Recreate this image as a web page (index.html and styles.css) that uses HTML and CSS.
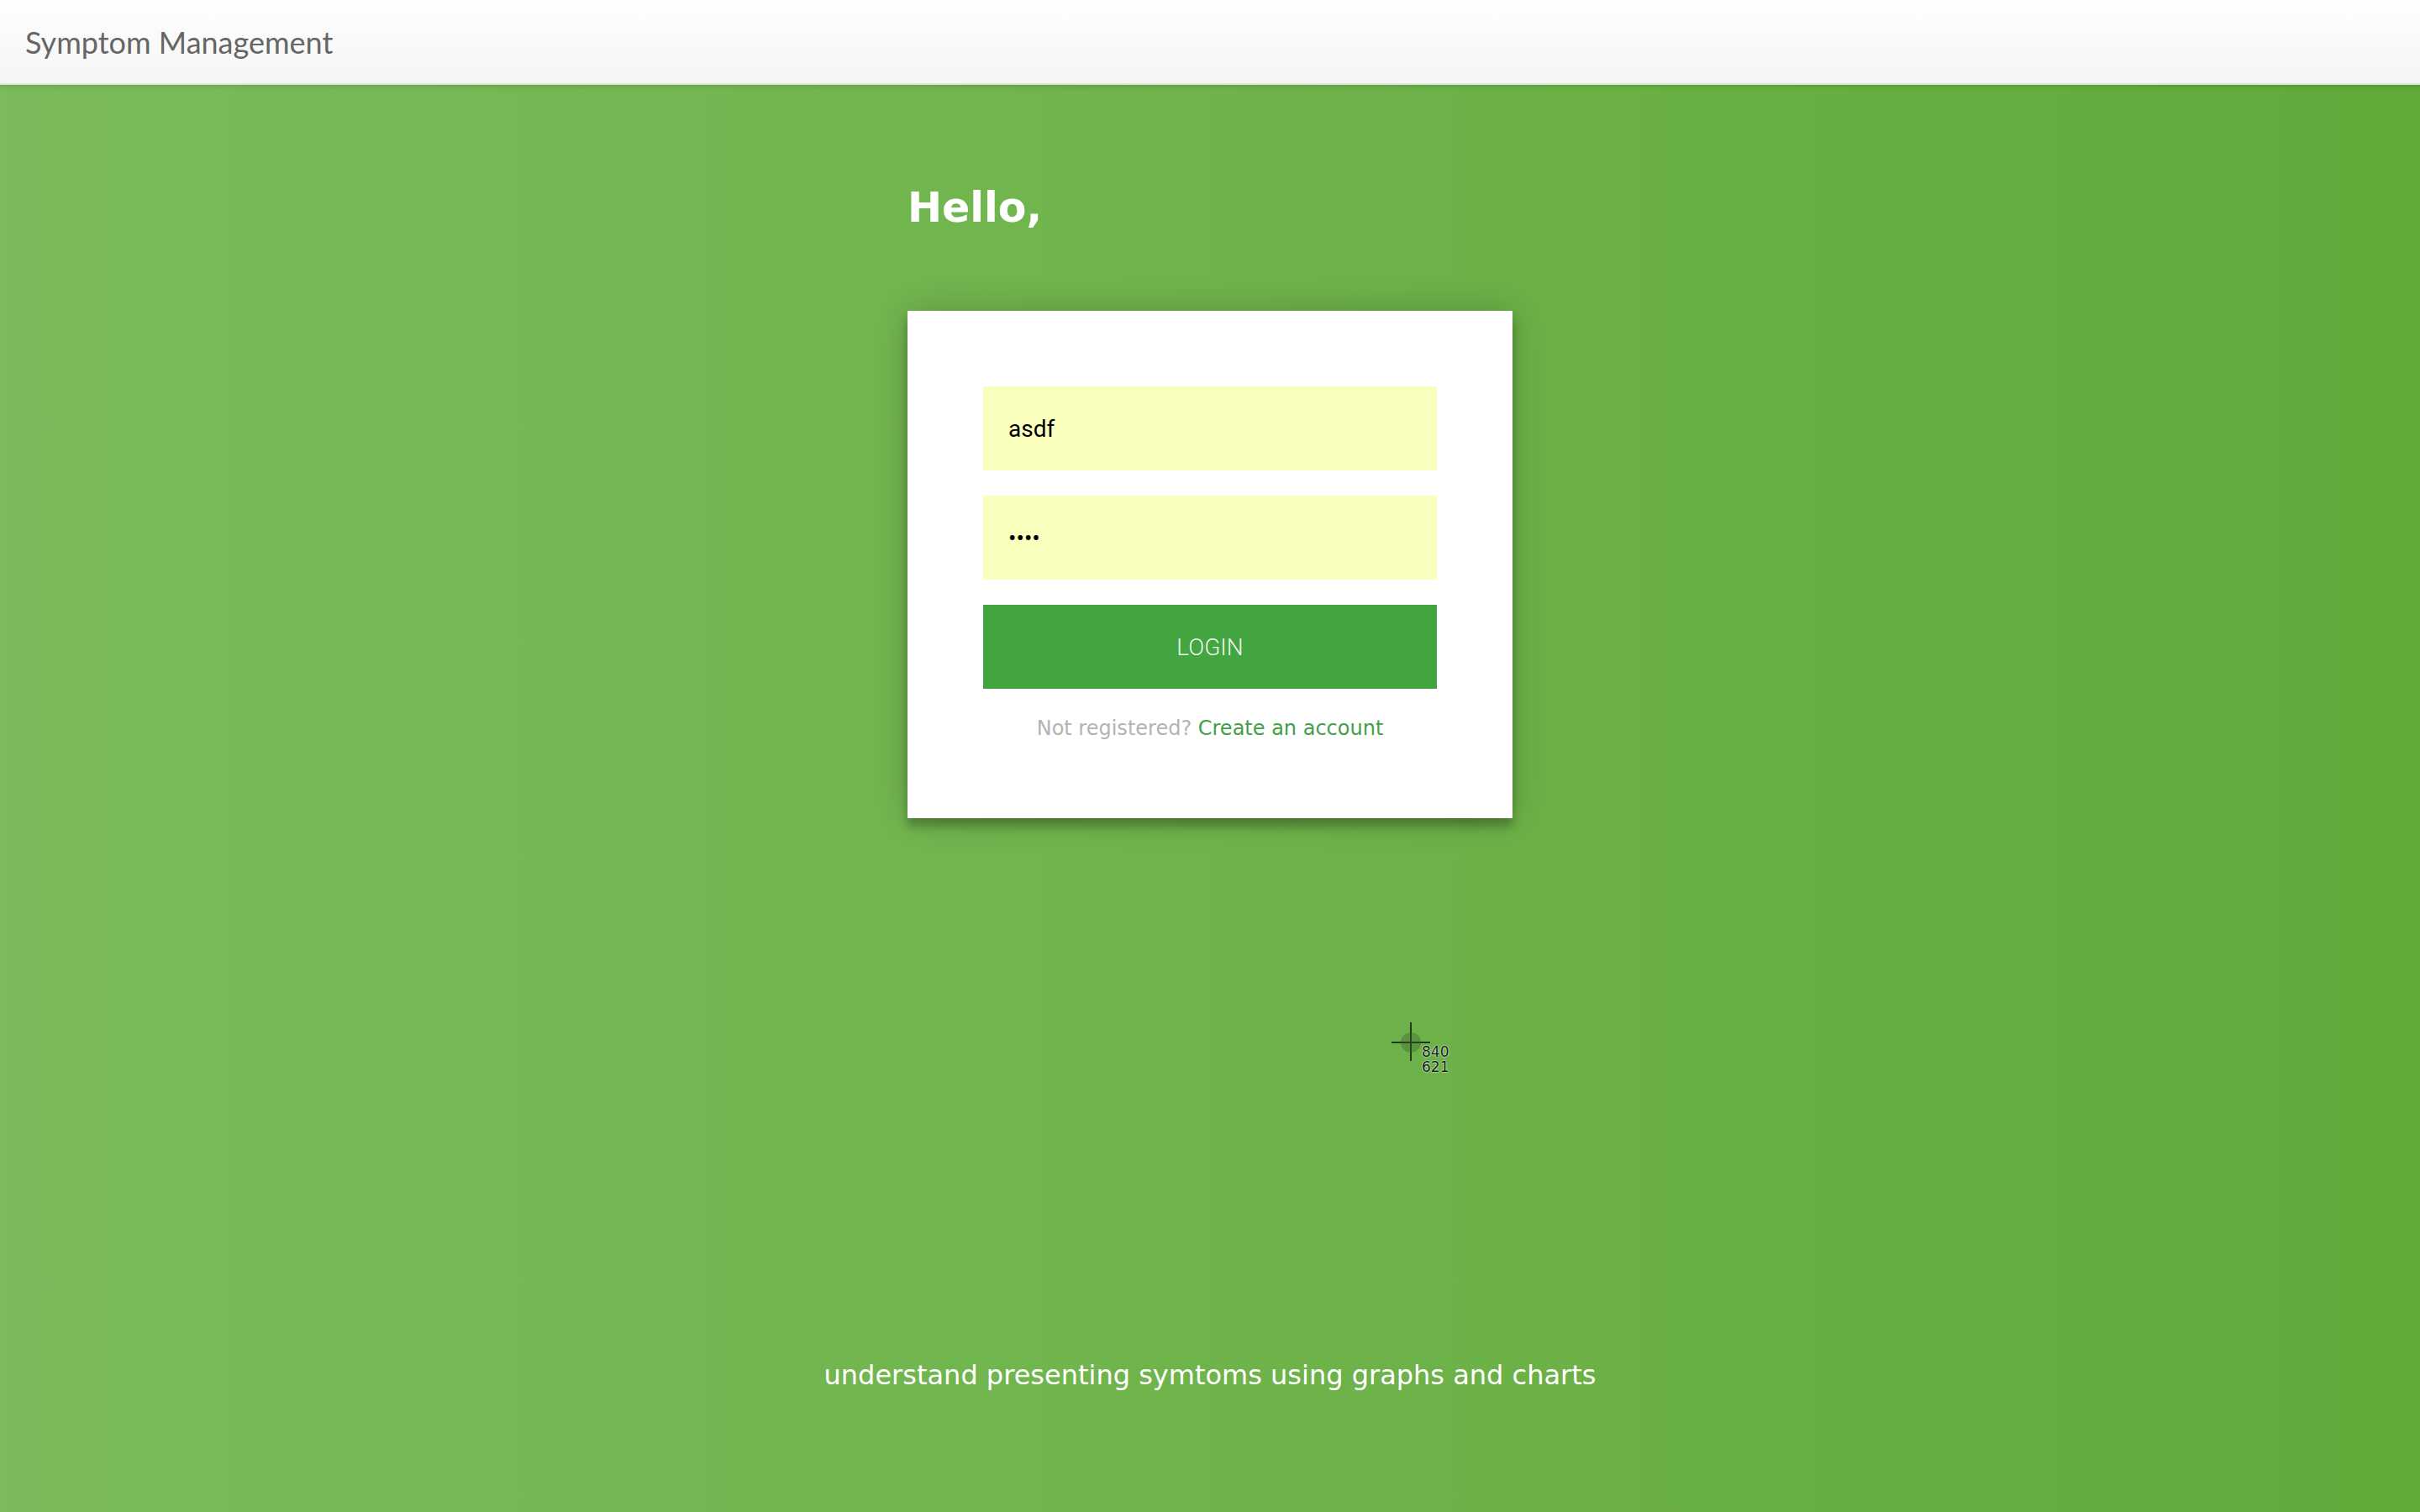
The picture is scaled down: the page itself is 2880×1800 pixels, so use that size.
FILE: index.html
```html
<!DOCTYPE html>
<html lang="en">
<head>
<meta charset="utf-8">
<title>Symptom Management</title>
<link rel="stylesheet" href="styles.css">
</head>
<body>
<header class="navbar">
  <span class="brand">Symptom Management</span>
</header>
<main class="page">
  <div class="column">
    <h1 class="hello">Hello,</h1>
    <form class="card">
      <input class="field" type="text" value="asdf">
      <input class="field" type="password" value="asdf">
      <button class="login" type="button">Login</button>
      <p class="message">Not registered? <a class="link" href="#">Create an account</a></p>
    </form>
  </div>
  <p class="tagline">understand presenting symtoms using graphs and charts</p>
</main>
<div class="cursor">
  <span class="cross-h"></span>
  <span class="cross-v"></span>
  <span class="cross-ring"></span>
  <span class="coords">840<br>621</span>
</div>
</body>
</html>
```

FILE: styles.css
```css
html, body {
  margin: 0;
  padding: 0;
}
body {
  width: 2880px;
  height: 1800px;
  overflow: hidden;
  background: linear-gradient(to right, #7bbb5b 0%, #6fb44b 50%, #61aa3a 100%);
  font-family: "DejaVu Sans", Verdana, sans-serif;
  position: relative;
}
.navbar {
  height: 101px;
  box-sizing: border-box;
  background: linear-gradient(to bottom, #ffffff 0%, #f5f5f5 100%);
  border-bottom: 2px solid #dfe9d9;
  box-shadow: 0 2px 6px rgba(0, 0, 0, 0.12);
  display: flex;
  align-items: center;
  padding: 0 30px;
}
.brand {
  font-family: Lato, "Open Sans", sans-serif;
  font-size: 36px;
  line-height: 40px;
  color: #666666;
}
.page {
  display: flex;
  flex-direction: column;
  align-items: center;
}
.column {
  width: 720px;
}
.hello {
  margin: 120px 0 96px;
  font-family: "DejaVu Sans", Verdana, sans-serif;
  font-weight: bold;
  font-size: 49px;
  line-height: 53px;
  color: #ffffff;
}
.card {
  background: #ffffff;
  padding: 90px;
  display: flex;
  flex-direction: column;
  box-shadow: 0 0 40px 0 rgba(0, 0, 0, 0.2), 0 10px 10px 0 rgba(0, 0, 0, 0.24);
}
.field {
  height: 100px;
  box-sizing: border-box;
  border: 0;
  outline: none;
  margin: 0 0 30px;
  padding: 0 30px;
  background: #faffbd;
  font-family: Roboto, sans-serif;
  font-size: 28px;
  color: #000000;
}
.login {
  height: 100px;
  border: 0;
  background: #42a540;
  color: rgba(255, 255, 255, 0.92);
  font-family: Roboto, sans-serif;
  font-weight: 300;
  font-size: 28px;
  text-transform: uppercase;
  cursor: pointer;
}
.message {
  margin: 30px 0 0;
  text-align: center;
  font-size: 24px;
  line-height: 1.42857;
  color: #b3b3b3;
}
.link {
  color: #43a047;
  text-decoration: none;
}
.tagline {
  margin: 640px 0 0;
  font-size: 32px;
  line-height: 46px;
  color: #ffffff;
  text-align: center;
}
.cursor {
  position: absolute;
  left: 1656px;
  top: 1217px;
  width: 80px;
  height: 70px;
}
.cross-h {
  position: absolute;
  left: 0;
  top: 23px;
  width: 46px;
  height: 2px;
  background: #1f3a1a;
}
.cross-v {
  position: absolute;
  left: 22px;
  top: 0;
  width: 2px;
  height: 46px;
  background: #1f3a1a;
}
.cross-ring {
  position: absolute;
  left: 11px;
  top: 12px;
  width: 24px;
  height: 24px;
  border-radius: 50%;
  background: rgba(60, 90, 50, 0.35);
}
.coords {
  position: absolute;
  left: 36px;
  top: 26px;
  font-family: "DejaVu Sans", sans-serif;
  font-size: 17px;
  line-height: 18px;
  color: #0b1a0b;
  text-shadow: 0 0 2px #ffffff, 0 0 1px #ffffff;
}
```
